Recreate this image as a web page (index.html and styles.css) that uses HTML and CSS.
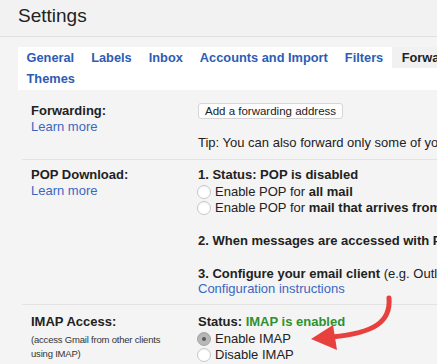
FILE: index.html
```html
<!DOCTYPE html>
<html>
<head>
<meta charset="utf-8">
<link rel="stylesheet" href="styles.css">
</head>
<body>
<div class="window">
  <header class="header">
    <h1 class="title">Settings</h1>
  </header>
  <nav class="tabs">
    <a class="tab">General</a>
    <a class="tab">Labels</a>
    <a class="tab">Inbox</a>
    <a class="tab">Accounts and Import</a>
    <a class="tab">Filters</a>
    <span class="tab tab-active">Forwarding and POP/IMAP</span>
    <a class="tab">Add-ons</a>
    <a class="tab">Chat</a>
    <a class="tab">Labs</a>
    <a class="tab">Offline</a>
    <span class="tab-break"></span>
    <a class="tab">Themes</a>
  </nav>
  <section class="settings">
    <div class="row row-fwd">
      <div class="label">
        <div class="label-title">Forwarding:</div>
        <a class="link">Learn more</a>
      </div>
      <div class="value">
        <button class="btn">Add a forwarding address</button>
        <div class="tip">Tip: You can also forward only some of your mail by creating a filter!</div>
      </div>
    </div>
    <div class="row row-pop">
      <div class="label">
        <div class="label-title">POP Download:</div>
        <a class="link">Learn more</a>
      </div>
      <div class="value">
        <div class="line"><b>1. Status: POP is disabled</b></div>
        <div class="line radio-line"><span class="radio"></span>Enable POP for&nbsp;<b>all mail</b></div>
        <div class="line radio-line"><span class="radio"></span>Enable POP for&nbsp;<b>mail that arrives from now on</b></div>
        <div class="line gap"><b>2. When messages are accessed with POP</b></div>
        <div class="line gap short"><b>3. Configure your email client</b>&nbsp;(e.g. Outlook, Eudora, Netscape Mail)</div>
        <div class="line"><a class="link">Configuration instructions</a></div>
      </div>
    </div>
    <div class="row row-imap">
      <div class="label">
        <div class="label-title">IMAP Access:</div>
        <div class="small">(access Gmail from other clients using IMAP)</div>
        <a class="link">Learn more</a>
      </div>
      <div class="value">
        <div class="line"><b>Status: <span class="green">IMAP is enabled</span></b></div>
        <div class="line radio-line"><span class="radio checked"></span>Enable IMAP</div>
        <div class="line radio-line"><span class="radio"></span>Disable IMAP</div>
      </div>
    </div>
  </section>
  <svg class="arrow" width="437" height="364" viewBox="0 0 437 364">
    <path d="M389 298 C 391 322, 374 333, 332 337" fill="none" stroke="#e7403d" stroke-width="5" stroke-linecap="round"/>
    <polygon points="311,339 333,325 337,350" fill="#e7403d"/>
  </svg>
</div>
</body>
</html>
```

FILE: styles.css
```css
html, body {
  margin: 0;
  padding: 0;
  overflow: hidden;
  background: #f4f4f4;
}
body {
  font-family: "Liberation Sans", Arial, sans-serif;
  color: #222;
  font-size: 13px;
}
.window {
  width: 900px;
  height: 364px;
  position: relative;
  overflow: hidden;
}
.header {
  height: 36px;
  border-bottom: 1px solid #e0e0e0;
  background: #f2f2f2;
}
.title {
  margin: 0;
  padding: 3px 0 0 18px;
  font-weight: normal;
  font-size: 19px;
  line-height: 26px;
  color: #222;
}
.tabs {
  margin: 10px 0 0 18px;
  background: #fff;
  display: flex;
  flex-wrap: wrap;
  padding: 0 0 1px 0;
}
.tab {
  font-weight: bold;
  font-size: 12.8px;
  line-height: 21px;
  color: #2d5cb4;
  padding: 0 8.5px;
  white-space: nowrap;
}
.tab-active {
  color: #222;
  background: #f1f1f1;
  padding: 0 10px;
}
.tab-break {
  flex-basis: 100%;
  height: 0;
}
.settings {
  padding: 0 0 0 22px;
}
.row {
  display: grid;
  grid-template-columns: 176px 1fr;
  border-bottom: 1px solid #e3e3e3;
}
.label {
  padding-left: 9px;
}
.label-title {
  font-weight: bold;
  font-size: 13px;
  line-height: 16px;
}
.link {
  color: #3a67c0;
  font-size: 13px;
  line-height: 15px;
}
.label .link {
  display: block;
}
.value {
  white-space: nowrap;
}
.row-fwd {
  padding: 13px 0 8px;
}
.btn {
  display: block;
  margin-top: 0;
  font-family: "Liberation Sans", Arial, sans-serif;
  font-size: 11.5px;
  height: 16px;
  line-height: 14px;
  padding: 0 6px;
  background: #fdfdfd;
  border: 1px solid #d6d6d6;
  border-radius: 3px;
  color: #222;
}
.tip {
  margin-top: 16px;
  font-size: 13px;
  line-height: 16px;
}
.row-pop {
  padding: 7px 0 8px;
}
.row-imap {
  padding: 9px 0 0;
  border-bottom: none;
}
.line {
  font-size: 13px;
  line-height: 16.5px;
  display: flex;
  align-items: center;
}
.line.gap {
  margin-top: 16.5px;
}
.line.short {
  line-height: 15px;
}
.radio-line {
  margin-left: -1px;
}
.radio {
  width: 14px;
  height: 14px;
  border-radius: 50%;
  border: 1px solid #c8c8c8;
  background: #fff;
  box-shadow: inset 0 1px 1px rgba(0, 0, 0, 0.06);
  margin-right: 4px;
  flex: none;
  box-sizing: border-box;
  position: relative;
}
.radio.checked {
  background: #b8b8b8;
  border-color: #a8a8a8;
}
.radio.checked::after {
  content: "";
  position: absolute;
  left: 4px;
  top: 4px;
  width: 4px;
  height: 4px;
  border-radius: 50%;
  background: #5a5a5a;
}
.green {
  color: #2e9130;
}
.small {
  font-size: 9.5px;
  letter-spacing: -0.2px;
  line-height: 14px;
  color: #333;
  width: 135px;
  margin-top: 3px;
}
.arrow {
  position: absolute;
  left: 0;
  top: 0;
  pointer-events: none;
}
```
